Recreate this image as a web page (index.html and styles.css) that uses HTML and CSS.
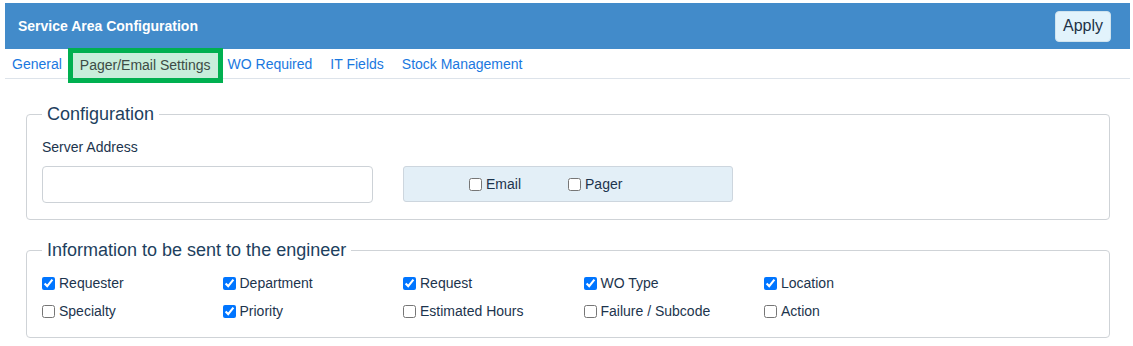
FILE: index.html
```html
<html>
    <head>
        <link rel="stylesheet" href="styles.css">
    </head>
    <body>
        <div class="page">
            <div class="header">
                <span class="title">Service Area Configuration</span>
                <button class="apply">Apply</button>
            </div>

            <div class="tabs">
                <a class="tab first">General</a>
                <a class="tab active">Pager/Email Settings</a>
                <a class="tab">WO Required</a>
                <a class="tab">IT Fields</a>
                <a class="tab">Stock Management</a>
            </div>

            <div class="content">
                <fieldset class="group">
                    <legend>Configuration</legend>
                    <label class="field-label" for="server">Server Address</label>
                    <div class="server-row">
                        <input type="text" id="server" class="textbox">
                        <div class="notify">
                            <label class="check"><input type="checkbox"> Email</label>
                            <label class="check"><input type="checkbox"> Pager</label>
                        </div>
                    </div>
                </fieldset>

                <fieldset class="group">
                    <legend>Information to be sent to the engineer</legend>
                    <div class="grid">
                        <label class="check"><input type="checkbox" checked> Requester</label>
                        <label class="check"><input type="checkbox" checked> Department</label>
                        <label class="check"><input type="checkbox" checked> Request</label>
                        <label class="check"><input type="checkbox" checked> WO Type</label>
                        <label class="check"><input type="checkbox" checked> Location</label>
                        <label class="check"><input type="checkbox"> Specialty</label>
                        <label class="check"><input type="checkbox" checked> Priority</label>
                        <label class="check"><input type="checkbox"> Estimated Hours</label>
                        <label class="check"><input type="checkbox"> Failure / Subcode</label>
                        <label class="check"><input type="checkbox"> Action</label>
                    </div>
                </fieldset>
            </div>
        </div>
    </body>
</html>
```

FILE: styles.css
```css
body
{
    margin: 0;
    font-family: "Liberation Sans", Arial, sans-serif;
    font-size: 14px;
    color: #1c344d;
    background: #fff;
}

.page
{
    padding: 3px 3px 0 5px;
}

.header
{
    display: flex;
    align-items: center;
    justify-content: space-between;
    height: 46px;
    padding: 0 19px 0 13px;
    background: #428bca;
}

.title
{
    color: #fff;
    font-weight: bold;
    font-size: 14px;
}

.apply
{
    height: 31px;
    padding: 0 7px;
    font-family: inherit;
    font-size: 16px;
    color: #1d3146;
    background: #e2f3fc;
    border: 1px solid #cfe3ee;
    border-radius: 4px;
}

.tabs
{
    display: flex;
    align-items: flex-end;
    height: 28px;
    margin-top: 1px;
    border-bottom: 1px solid #dde3ea;
}

.tab
{
    padding: 0 9px;
    line-height: 28px;
    color: #1a78e0;
    cursor: pointer;
}

.tab.first
{
    padding: 0 6px 0 7px;
}

.tab.active
{
    margin: 0 1px 0 5px;
    padding: 0 7px;
    line-height: 25px;
    color: #3d4c45;
    background: #c8eedb;
    outline: 5px solid #00b050;
}

.content
{
    padding: 25px 20px 0 21px;
}

.group
{
    margin: 0 0 20px 0;
    padding: 0 15px;
    border: 1px solid #cfd3d7;
    border-radius: 4px;
}

.group legend
{
    padding: 0 5px;
    font-size: 18px;
    color: #1e3f5e;
}

.field-label
{
    display: block;
    margin-top: 12px;
    line-height: 20px;
}

.server-row
{
    display: flex;
    gap: 30px;
    margin: 9px 0 16px 0;
}

.textbox
{
    width: 331px;
    height: 37px;
    border: 1px solid #cdd2d7;
    border-radius: 4px;
}

.notify
{
    display: flex;
    align-items: center;
    gap: 47px;
    width: 330px;
    height: 36px;
    box-sizing: border-box;
    padding-left: 65px;
    background: #e3eff7;
    border: 1px solid #cdd6de;
    border-radius: 3px;
}

.check
{
    display: flex;
    align-items: center;
}

.check input
{
    margin: 0 4px 0 0;
}

.grid
{
    display: grid;
    grid-template-columns: repeat(5, 180.5px);
    grid-auto-rows: 28px;
    align-items: center;
    padding: 8px 0 12px 0;
}
```
